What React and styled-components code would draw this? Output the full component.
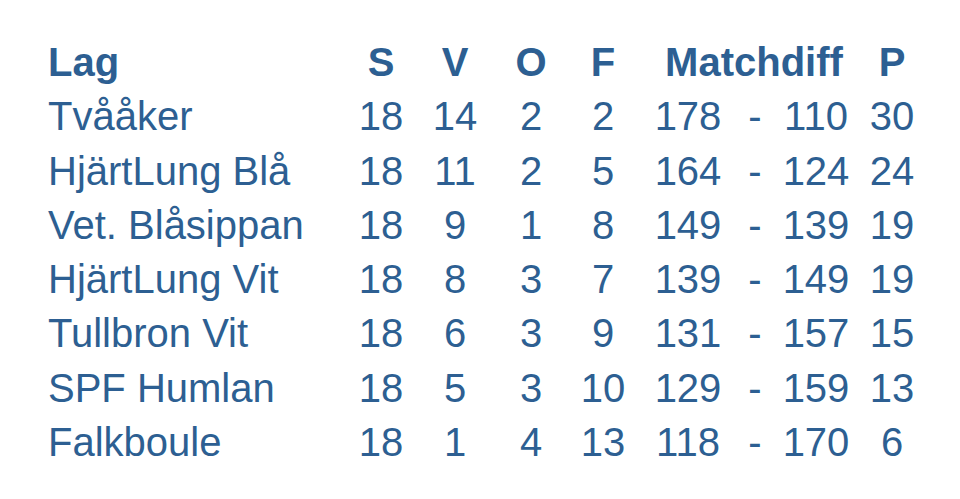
import React from 'react';
import styled, { createGlobalStyle } from 'styled-components';

const GlobalStyle = createGlobalStyle`
  html, body {
    margin: 0;
    padding: 0;
    background: #ffffff;
  }
  body {
    font-family: "Liberation Sans", Arial, sans-serif;
  }
`;

const Page = styled.div`
  width: 960px;
  height: 499px;
  box-sizing: border-box;
  padding: 35px 0 0 48px;
  background: #ffffff;
`;

const Table = styled.div`
  display: grid;
  grid-template-columns: 297px 72px 76px 76px 68px 102px 32px 90px 62px;
  grid-auto-rows: 54.3px;
  font-size: 40px;
  line-height: 54.3px;
  color: #2d5f92;
`;

const Cell = styled.div`
  text-align: ${(p) => p.align || 'center'};
  white-space: nowrap;
  font-weight: ${(p) => (p.head ? 700 : 400)};
  ${(p) => p.span && `grid-column: span ${p.span};`}
  ${(p) => p.shift && `padding-left: ${p.shift}px;`}
`;

const teams = [
  { name: 'Tvååker', s: 18, v: 14, o: 2, f: 2, plus: 178, minus: 110, p: 30 },
  { name: 'HjärtLung Blå', s: 18, v: 11, o: 2, f: 5, plus: 164, minus: 124, p: 24 },
  { name: 'Vet. Blåsippan', s: 18, v: 9, o: 1, f: 8, plus: 149, minus: 139, p: 19 },
  { name: 'HjärtLung Vit', s: 18, v: 8, o: 3, f: 7, plus: 139, minus: 149, p: 19 },
  { name: 'Tullbron Vit', s: 18, v: 6, o: 3, f: 9, plus: 131, minus: 157, p: 15 },
  { name: 'SPF Humlan', s: 18, v: 5, o: 3, f: 10, plus: 129, minus: 159, p: 13 },
  { name: 'Falkboule', s: 18, v: 1, o: 4, f: 13, plus: 118, minus: 170, p: 6 },
];

export default function App() {
  return (
    <>
      <GlobalStyle />
      <Page>
        <Table>
          <Cell head align="left">Lag</Cell>
          <Cell head>S</Cell>
          <Cell head>V</Cell>
          <Cell head>O</Cell>
          <Cell head>F</Cell>
          <Cell head span={3} shift={10}>Matchdiff</Cell>
          <Cell head>P</Cell>
          {teams.map((t) => (
            <React.Fragment key={t.name}>
              <Cell align="left">{t.name}</Cell>
              <Cell>{t.s}</Cell>
              <Cell>{t.v}</Cell>
              <Cell>{t.o}</Cell>
              <Cell>{t.f}</Cell>
              <Cell>{t.plus}</Cell>
              <Cell>-</Cell>
              <Cell>{t.minus}</Cell>
              <Cell>{t.p}</Cell>
            </React.Fragment>
          ))}
        </Table>
      </Page>
    </>
  );
}
